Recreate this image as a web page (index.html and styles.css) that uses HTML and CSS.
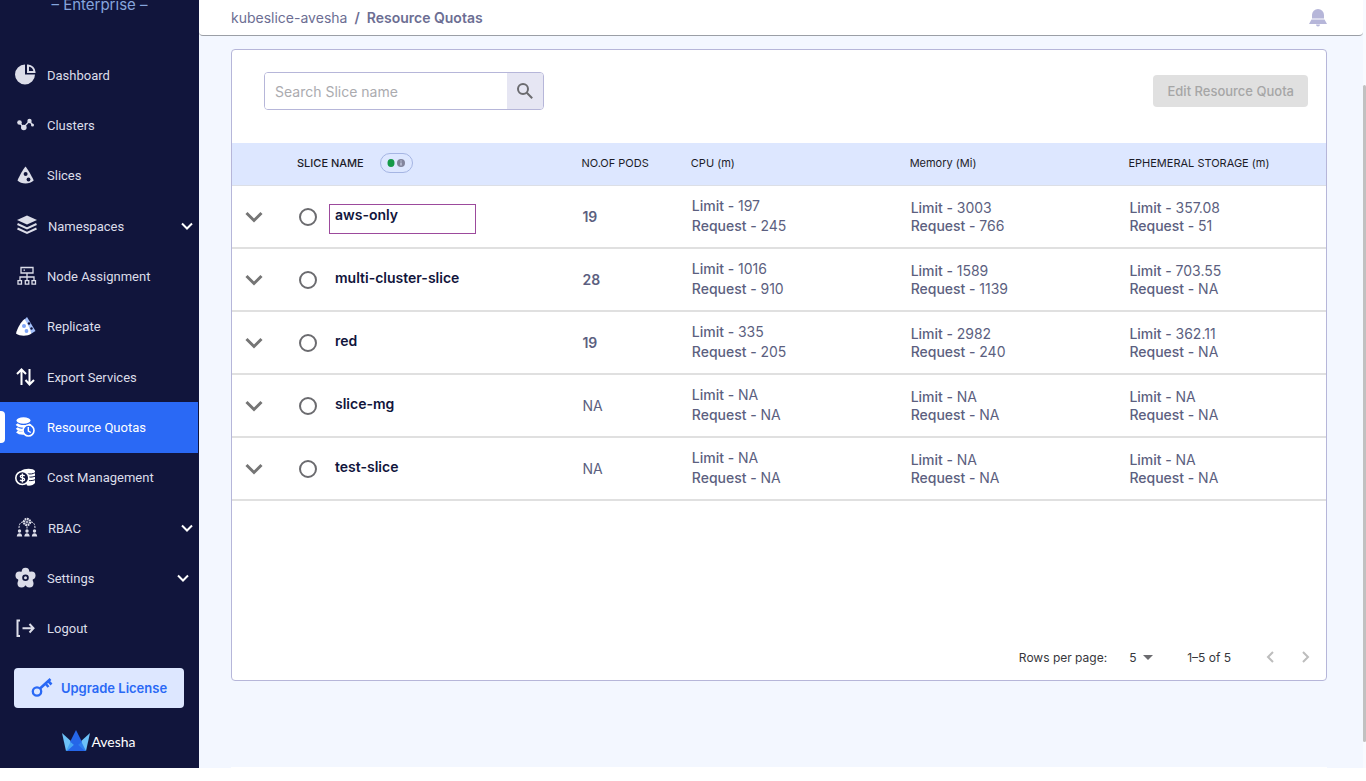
FILE: index.html
```html
<!DOCTYPE html>
<html lang="en">
  <head>
    <meta charset="UTF-8" />
    <meta name="viewport" content="width=device-width, initial-scale=1.0" />
    <title>Resource Quotas</title>
    <link rel="stylesheet" href="styles.css">
  </head>
  <body>
    <div class="app">
      <aside class="sidebar">
        <div class="edition">– Enterprise –</div>
        <nav class="nav">
          <a class="nav-item" href="#">
            <svg class="nav-icon" viewBox="0 0 22 22" fill="#dcdde9">
              <path d="M10 .5a10 10 0 1 0 10 10H10z" />
              <path fill="none" stroke="#dcdde9" stroke-width="2" d="M13 1.500v6.500h6.500A7 7 0 0 0 13 1.500z" />
            </svg>
            <span>Dashboard</span>
          </a>
          <a class="nav-item" href="#">
            <svg class="nav-icon" viewBox="0 0 22 22" fill="#dcdde9">
              <path fill="none" stroke="#dcdde9" stroke-width="1.300" d="M4.500 8.500l4 5 6-6.500 3 4" />
              <circle cx="4.500" cy="8.500" r="2.300" /><circle cx="8.800" cy="13.500" r="2.800" />
              <circle cx="14.500" cy="7" r="2.200" /><circle cx="17.500" cy="11" r="1.500" />
            </svg>
            <span>Clusters</span>
          </a>
          <a class="nav-item" href="#">
            <svg class="nav-icon" viewBox="0 0 22 22">
              <path fill="#dcdde9" d="M10.500 1.500c2.500 3 6 9 8.200 14-4 4-12.500 4-16.200 0C4.500 10.500 8 4.500 10.500 1.500z" />
              <circle cx="10.600" cy="9" r="2" fill="#11153c" /><circle cx="13.500" cy="14.500" r="1.900" fill="#11153c" />
            </svg>
            <span>Slices</span>
          </a>
          <a class="nav-item wide" href="#">
            <svg class="nav-icon" viewBox="0 0 22 22">
              <path fill="#dcdde9" d="M11 .5l10 4.500-10 4.500L1 5z" />
              <path fill="none" stroke="#dcdde9" stroke-width="2" d="M1.500 9L11 13.500 20.500 9M1.500 13.500l9.500 4.500 9.500-4.500" />
            </svg>
            <span>Namespaces</span>
            <svg class="caret" viewBox="0 0 12 8"><path d="M1 1.500l5 5 5-5" /></svg>
          </a>
          <a class="nav-item" href="#">
            <svg class="nav-icon" viewBox="0 0 22 22" fill="none" stroke="#dcdde9" stroke-width="1.300">
              <path d="M6 2.500h12v5.500H6zM8.500 5.200h1.500M12 8v8M5 16v-4h14v4M3 15.700h3.500v3.500H3zM10.300 15.700h3.500v3.500h-3.500zM17 15.700h3.500v3.500H17z" />
            </svg>
            <span>Node Assignment</span>
          </a>
          <a class="nav-item" href="#">
            <svg class="nav-icon" viewBox="0 0 22 22">
              <path fill="#a3bffa" d="M12 1l8.500 14-4 2.500L9 4z" />
              <path fill="#fff" d="M9.500 3C12 7 15 12 16.500 17.500c-4 3-11.500 3-15.500 0C2.500 11.500 6 6 9.500 3z" />
              <circle cx="9" cy="10" r="2" fill="#7fa5f7" /><circle cx="11.500" cy="15" r="1.900" fill="#7fa5f7" />
              <circle cx="14" cy="7.500" r="1.200" fill="#11153c" /><circle cx="16.500" cy="12.500" r="1.200" fill="#11153c" />
            </svg>
            <span>Replicate</span>
          </a>
          <a class="nav-item" href="#">
            <svg class="nav-icon" viewBox="0 0 22 22" fill="none" stroke="#fff" stroke-width="2">
              <path d="M6.500 19V4M2 8l4.500-4.500L11 8M14.500 3v15M10.500 14l4 4.500 4.500-4.500" />
            </svg>
            <span>Export Services</span>
          </a>
          <a class="nav-item active" href="#">
            <svg class="nav-icon" viewBox="0 0 22 22">
              <ellipse cx="8.500" cy="4.500" rx="7" ry="3.200" fill="#fff" />
              <path fill="none" stroke="#fff" stroke-width="2.600" d="M1.800 8c2 3.200 12 3.200 13.500 0M1.800 12c2 2.500 7 2.500 8.500 2M2 15.500c2 2 5 2 7.500 1.800" />
              <circle cx="13.500" cy="14.500" r="5.500" fill="#2a69f5" stroke="#fff" stroke-width="1.600" />
              <path fill="none" stroke="#fff" stroke-width="1.400" d="M13.300 11v4l2.500 1.500" />
            </svg>
            <span>Resource Quotas</span>
          </a>
          <a class="nav-item" href="#">
            <svg class="nav-icon" viewBox="0 0 22 22">
              <path fill="#fff" d="M6 4c3-3 12.500-3 14 0v12c-1 2-5 3-8 2.500z" />
              <path fill="none" stroke="#11153c" stroke-width="1" d="M11 6.500c4 1 7 .5 9.500-1M13 10c3 .3 5.500 0 7.500-1M13 13.500c3 .3 5.500 0 7.500-1" />
              <circle cx="7.300" cy="11" r="6.500" fill="#11153c" stroke="#fff" stroke-width="1.600" />
              <path fill="none" stroke="#fff" stroke-width="1.300" d="M9.600 9c-1-1.300-4.300-1.200-4.300.5 0 1.900 4.300 1 4.300 3 0 1.800-3.500 1.700-4.600.3M7.400 6.500v9" />
            </svg>
            <span>Cost Management</span>
          </a>
          <a class="nav-item wide" href="#">
            <svg class="nav-icon" viewBox="0 0 22 22" fill="#dcdde9">
              <circle cx="11" cy="5" r="3" fill="none" stroke="#dcdde9" stroke-width="2.400" stroke-dasharray="1.700 .6" />
              <circle cx="11" cy="5" r="1" />
              <path fill="none" stroke="#dcdde9" stroke-dasharray="2 1" d="M7 5c-2.500 0-4 2-4 6M15 5c2.500 0 4 2 4 6M11 9.500v3" />
              <circle cx="3.500" cy="14" r="1.700" /><circle cx="11" cy="14" r="1.700" /><circle cx="18.500" cy="14" r="1.700" />
              <path d="M.8 19.500c0-4.500 5.400-4.500 5.400 0zM8.300 19.500c0-4.500 5.400-4.500 5.400 0zM15.800 19.500c0-4.500 5.400-4.500 5.400 0z" />
            </svg>
            <span>RBAC</span>
            <svg class="caret" viewBox="0 0 12 8"><path d="M1 1.500l5 5 5-5" /></svg>
          </a>
          <a class="nav-item" href="#">
            <svg class="nav-icon" viewBox="0 0 22 22" fill="#dcdde9">
              <circle cx="10.500" cy="4.500" r="3.800" /><circle cx="16.500" cy="8.500" r="4" /><circle cx="14.500" cy="16.500" r="4" />
              <circle cx="6.500" cy="16.500" r="4" /><circle cx="4.500" cy="8.500" r="4" /><circle cx="10.500" cy="11" r="7.600" />
              <circle cx="10.500" cy="10.800" r="2.400" fill="none" stroke="#11153c" stroke-width="1.800" />
            </svg>
            <span>Settings</span>
            <svg class="caret inset" viewBox="0 0 12 8"><path d="M1 1.500l5 5 5-5" /></svg>
          </a>
          <a class="nav-item" href="#">
            <svg class="nav-icon" viewBox="0 0 22 22" fill="none" stroke="#dcdde9" stroke-width="2">
              <path d="M5 2.500H2.500v15.500H5M7.500 10.200H18M14.500 6l4 4.200-4 4.300" />
            </svg>
            <span>Logout</span>
          </a>
        </nav>
        <div class="sidebar-footer">
          <button class="upgrade" type="button">
            <svg viewBox="0 0 22 22" width="22" height="22" fill="none" stroke="#2a69f5">
              <circle cx="6" cy="14.500" r="4.200" stroke-width="2.300" />
              <path stroke-width="2.600" d="M9 11.500L19.500 2M14.500 6.500l3 3.500M17.200 4l3.300 3.500" />
            </svg>
            <span>Upgrade License</span>
          </button>
          <div class="brand">
            <svg viewBox="0 0 28 22" width="28" height="22">
              <path fill="#6cc1f8" d="M0 3l11 10-7 8z" />
              <path fill="#6cc1f8" d="M28 3L17 13l7 8z" />
              <path fill="#2566e8" d="M14 0l6 12-6 9-6-9z" />
              <path fill="#45a5f5" d="M4 21l4.500-9L19 21z" />
              <path fill="#2f80ee" d="M24 21l-4.500-9L9 21z" />
              <path fill="#2566e8" d="M14 13l9 8H5z" />
            </svg>
            <span>Avesha</span>
          </div>
        </div>
      </aside>

      <div class="main">
        <header class="topbar">
          <div class="crumbs"><a href="#">kubeslice-avesha</a><span>/</span><b>Resource Quotas</b></div>
          <button class="bell" type="button" aria-label="Notifications">
            <svg viewBox="0 0 18 18" width="18" height="18" fill="#b6b6d9">
              <path d="M3 9.500V6a6 6 0 0 1 12 0v3.500zM2.500 10.500h13L18 15H0zM7 15.500h4a2 2 0 0 1-4 0z" />
            </svg>
          </button>
        </header>

        <main class="content">
          <section class="card">
            <div class="toolbar">
              <form class="search">
                <input type="text" placeholder="Search Slice name" aria-label="Search Slice name" />
                <button type="button" aria-label="Search">
                  <svg viewBox="0 0 18 18" width="18" height="18" fill="none" stroke="#6b6b6f" stroke-width="2">
                    <circle cx="7" cy="7" r="5" /><path d="M10.800 10.800l5.400 5.400" />
                  </svg>
                </button>
              </form>
              <button class="edit" type="button" disabled>Edit Resource Quota</button>
            </div>

            <table class="quotas">
              <colgroup>
                <col class="col-toggle" /><col class="col-name" /><col class="col-pods" />
                <col class="col-res" /><col class="col-res" /><col />
              </colgroup>
              <thead>
                <tr>
                  <th></th>
                  <th>
                    <div class="name-head">
                      SLICE NAME
                      <span class="status">
                        <svg viewBox="0 0 20 10" width="20" height="10">
                          <ellipse cx="5" cy="5" rx="3.500" ry="4" fill="#159a48" />
                          <circle cx="15" cy="5" r="4" fill="#82849c" />
                          <path stroke="#dfe6fb" d="M15 2.500v1M15 4.500v3" />
                        </svg>
                      </span>
                    </div>
                  </th>
                  <th>NO.OF PODS</th>
                  <th>CPU (m)</th>
                  <th>Memory (Mi)</th>
                  <th>EPHEMERAL STORAGE (m)</th>
                </tr>
              </thead>
              <tbody>
                <tr>
                  <td><button class="toggle" type="button" aria-label="Expand aws-only"><svg viewBox="0 0 18 12"><path d="M1.500 2L9 9.500 16.500 2" /></svg></button></td>
                  <td><label class="slice selected"><input type="radio" name="slice" /><span>aws-only</span></label></td>
                  <td class="pods">19</td>
                  <td class="cpu">Limit - <span>197</span><br />Request - <span>245</span></td>
                  <td>Limit - <span>3003</span><br />Request - <span>766</span></td>
                  <td>Limit - <span>357.08</span><br />Request - <span>51</span></td>
                </tr>
                <tr>
                  <td><button class="toggle" type="button" aria-label="Expand multi-cluster-slice"><svg viewBox="0 0 18 12"><path d="M1.500 2L9 9.500 16.500 2" /></svg></button></td>
                  <td><label class="slice"><input type="radio" name="slice" /><span>multi-cluster-slice</span></label></td>
                  <td class="pods">28</td>
                  <td class="cpu">Limit - <span>1016</span><br />Request - <span>910</span></td>
                  <td>Limit - <span>1589</span><br />Request - <span>1139</span></td>
                  <td>Limit - <span>703.55</span><br />Request - <span>NA</span></td>
                </tr>
                <tr>
                  <td><button class="toggle" type="button" aria-label="Expand red"><svg viewBox="0 0 18 12"><path d="M1.500 2L9 9.500 16.500 2" /></svg></button></td>
                  <td><label class="slice"><input type="radio" name="slice" /><span>red</span></label></td>
                  <td class="pods">19</td>
                  <td class="cpu">Limit - <span>335</span><br />Request - <span>205</span></td>
                  <td>Limit - <span>2982</span><br />Request - <span>240</span></td>
                  <td>Limit - <span>362.11</span><br />Request - <span>NA</span></td>
                </tr>
                <tr>
                  <td><button class="toggle" type="button" aria-label="Expand slice-mg"><svg viewBox="0 0 18 12"><path d="M1.500 2L9 9.500 16.500 2" /></svg></button></td>
                  <td><label class="slice"><input type="radio" name="slice" /><span>slice-mg</span></label></td>
                  <td><span>NA</span></td>
                  <td class="cpu">Limit - <span>NA</span><br />Request - <span>NA</span></td>
                  <td>Limit - <span>NA</span><br />Request - <span>NA</span></td>
                  <td>Limit - <span>NA</span><br />Request - <span>NA</span></td>
                </tr>
                <tr>
                  <td><button class="toggle" type="button" aria-label="Expand test-slice"><svg viewBox="0 0 18 12"><path d="M1.500 2L9 9.500 16.500 2" /></svg></button></td>
                  <td><label class="slice"><input type="radio" name="slice" /><span>test-slice</span></label></td>
                  <td><span>NA</span></td>
                  <td class="cpu">Limit - <span>NA</span><br />Request - <span>NA</span></td>
                  <td>Limit - <span>NA</span><br />Request - <span>NA</span></td>
                  <td>Limit - <span>NA</span><br />Request - <span>NA</span></td>
                </tr>
              </tbody>
            </table>

            <div class="pager">
              <label for="rows">Rows per page:</label>
              <div class="rows">
                <select id="rows">
                  <option>5</option>
                  <option>10</option>
                </select>
                <svg viewBox="0 0 10 5" width="10" height="5"><path fill="#6b6b6f" d="M0 0h10L5 5z" /></svg>
              </div>
              <span class="range">1–5 of 5</span>
              <button type="button" aria-label="Previous page" disabled><svg viewBox="0 0 8 12"><path d="M7 1L2 6l5 5" /></svg></button>
              <button type="button" aria-label="Next page" disabled><svg viewBox="0 0 8 12"><path d="M1 1l5 5-5 5" /></svg></button>
            </div>
          </section>
          <section class="next-card"></section>
        </main>
      </div>

      <div class="scrollbar"><div class="thumb"></div></div>
    </div>
  </body>
</html>
```
FILE: styles.css
```css
* {
  box-sizing: border-box;
}

body {
  margin: 0;
  font-family: Inter, "Liberation Sans", sans-serif;
  font-size: 14px;
  color: #5c5f80;
  background: #fff;
}

a {
  color: inherit;
  text-decoration: none;
}

button {
  font: inherit;
  border: 0;
  padding: 0;
  background: none;
}

svg {
  display: block;
  flex: none;
}

.app {
  display: flex;
  min-height: calc(100vh - 13px);
}

/* Sidebar */
.sidebar {
  display: flex;
  flex-direction: column;
  width: 199px;
  flex: none;
  background: #11153c;
  color: #dcdde9;
}

.edition {
  height: 50px;
  line-height: 10px;
  font-size: 15px;
  text-align: center;
  color: #86a5dc;
}

.nav {
  flex: 1;
  display: flex;
  flex-direction: column;
}

.nav-item {
  flex: 1;
  display: flex;
  align-items: center;
  gap: 10px;
  margin-right: 1px;
  padding: 0 5px 0 15px;
  font-family: Roboto, sans-serif;
  font-size: 13px;
}

.nav-item.wide {
  padding-left: 16px;
}

.nav-icon {
  width: 22px;
  height: 22px;
}

.caret {
  width: 12px;
  height: 8px;
  margin-left: auto;
  fill: none;
  stroke: #fff;
  stroke-width: 2;
}

.caret.inset {
  margin-right: 4px;
}

.nav-item.active {
  background: #2a69f5;
  color: #fff;
  position: relative;
}

.nav-item.active::before {
  content: "";
  position: absolute;
  left: 0;
  top: 9px;
  width: 5px;
  height: 32px;
  background: #fff;
  border-radius: 0 4px 4px 0;
}

.sidebar-footer {
  height: 114px;
  padding: 14px 15px 0 14px;
}

.upgrade {
  display: flex;
  align-items: center;
  justify-content: center;
  gap: 8px;
  width: 100%;
  height: 40px;
  border-radius: 4px;
  background: #dde7ff;
  color: #2a69f5;
  font-size: 13px;
  font-weight: 600;
}

.brand {
  display: flex;
  align-items: center;
  justify-content: center;
  gap: 1px;
  margin-top: 22px;
  color: #fff;
  font-family: Lato, sans-serif;
  font-size: 14px;
}

/* Main column */
.main {
  flex: 1;
  display: flex;
  flex-direction: column;
  min-width: 0;
  background: #f3f7ff;
}

.topbar {
  display: flex;
  align-items: center;
  justify-content: space-between;
  height: 36px;
  padding: 0 36px 0 32px;
  background: #fff;
  border-bottom: 1px solid #9b9fa6;
  border-radius: 0 0 4px 4px;
  color: #6c6e93;
}

.crumbs {
  display: flex;
  gap: 7px;
}

.crumbs b,
.crumbs span {
  font-weight: 600;
}

.content {
  flex: 1;
  display: flex;
  flex-direction: column;
  padding: 13px 36px 0 32px;
}

.card {
  display: flex;
  flex-direction: column;
  min-height: 632px;
  background: #fff;
  border: 1px solid #b6b6d9;
  border-radius: 4px;
}

.next-card {
  height: 1px;
  margin-top: auto;
  background: #fff;
}

.toolbar {
  display: flex;
  justify-content: space-between;
  align-items: flex-start;
  height: 93px;
  padding: 22px 18px 0 32px;
}

.search {
  display: flex;
  width: 280px;
  height: 38px;
  border: 1px solid #b6b6d9;
  border-radius: 4px;
  overflow: hidden;
}

.search input {
  flex: 1;
  min-width: 0;
  border: 0;
  outline: 0;
  padding: 0 10px;
  font: inherit;
}

.search input::placeholder {
  color: #ababaf;
}

.search button {
  display: flex;
  align-items: center;
  justify-content: center;
  width: 36px;
  background: #e6e6f3;
}

.edit {
  height: 32px;
  margin-top: 3px;
  padding: 0 14px;
  border-radius: 4px;
  background: #e0e0e0;
  color: #a6a6a6;
  font-size: 13px;
  font-weight: 500;
}

/* Quota table */
.quotas {
  width: 100%;
  table-layout: fixed;
  border-collapse: separate;
  border-spacing: 0;
}

.col-toggle {
  width: 49px;
}

.col-name {
  width: 26%;
}

.col-pods {
  width: 10%;
}

.col-res {
  width: 20%;
}

.quotas th {
  height: 43px;
  padding: 0 0 3px 16px;
  background: #dde7ff;
  border-bottom: 1px solid #dcdfe6;
  color: #1c1c28;
  font-size: 11px;
  font-weight: 400;
  text-align: left;
}

.name-head {
  display: flex;
  align-items: center;
  gap: 16px;
  font-weight: 500;
}

.status {
  display: flex;
  align-items: center;
  justify-content: center;
  width: 33px;
  height: 20px;
  border: 1px solid #a5b5e3;
  border-radius: 10px;
}

.quotas td {
  height: 63px;
  padding: 0 0 0 17px;
  border-bottom: 2px solid #e0e0e0;
  line-height: 18px;
  font-weight: 500;
}

.quotas td:first-child {
  padding-left: 13px;
}

.quotas td span {
  font-weight: 400;
}

.quotas .cpu {
  padding-bottom: 2px;
  line-height: 20px;
}

.quotas .pods {
  font-weight: 600;
}

.toggle {
  display: block;
}

.toggle svg {
  width: 18px;
  height: 12px;
  fill: none;
  stroke: #757575;
  stroke-width: 3;
}

.slice {
  display: flex;
  align-items: center;
  gap: 12px;
  padding-left: 1px;
}

.slice input {
  appearance: none;
  width: 18px;
  height: 18px;
  margin: 0;
  border: 2px solid #6b6b6f;
  border-radius: 50%;
}

.slice input:checked {
  background: #2a69f5;
}

.quotas .slice span {
  width: 147px;
  height: 30px;
  margin-top: 4px;
  padding: 0 5px;
  border: 1px solid transparent;
  color: #11153c;
  line-height: 20px;
  font-weight: 600;
}

.quotas .slice.selected span {
  border-color: #9c4a9c;
}

/* Pagination */
.pager {
  display: flex;
  align-items: center;
  justify-content: flex-end;
  height: 46px;
  margin-top: auto;
  padding-right: 16px;
  font-size: 12px;
  color: #37373c;
}

.rows {
  display: flex;
  align-items: center;
  margin: 0 34px 0 22px;
}

.rows select {
  appearance: none;
  width: 14px;
  border: 0;
  padding: 0;
  background: none;
  font: inherit;
  color: inherit;
}

.range {
  margin-right: 35px;
}

.pager button {
  margin-left: 28px;
}

.range + button {
  margin-left: 0;
}

.pager button svg {
  width: 8px;
  height: 12px;
  fill: none;
  stroke: #bdbdbd;
  stroke-width: 2;
}

/* Page scrollbar */
.scrollbar {
  display: flex;
  width: 3px;
  flex: none;
  padding: 85px 0 26px;
  background: #f8faff;
}

.thumb {
  flex: 1;
  background: #c1c1c1;
  border-radius: 2px;
}
```
